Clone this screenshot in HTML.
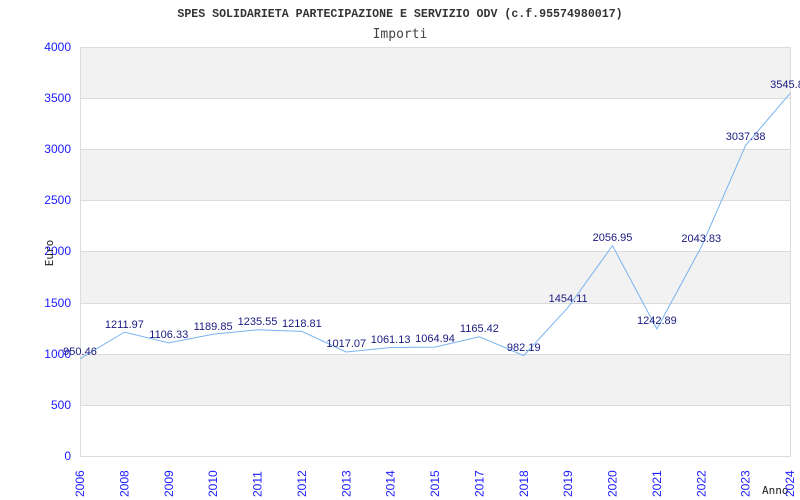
<!DOCTYPE html>
<html><head><meta charset="utf-8"><style>body{margin:0;background:#fff}svg{display:block}</style></head><body>
<svg width="800" height="500" xmlns="http://www.w3.org/2000/svg" font-family="Liberation Sans, sans-serif">
<rect width="800" height="500" fill="#fff"/>
<g fill="#f2f2f2">
<rect x="80" y="47" width="710" height="51"/>
<rect x="80" y="149" width="710" height="51"/>
<rect x="80" y="251" width="710" height="52"/>
<rect x="80" y="354" width="710" height="51"/>
</g>
<g stroke="#dcdcdc" stroke-width="1">
<line x1="80" y1="47.5" x2="790" y2="47.5"/>
<line x1="80" y1="98.5" x2="790" y2="98.5"/>
<line x1="80" y1="149.5" x2="790" y2="149.5"/>
<line x1="80" y1="200.5" x2="790" y2="200.5"/>
<line x1="80" y1="251.5" x2="790" y2="251.5"/>
<line x1="80" y1="303.5" x2="790" y2="303.5"/>
<line x1="80" y1="354.5" x2="790" y2="354.5"/>
<line x1="80" y1="405.5" x2="790" y2="405.5"/>
<line x1="80" y1="456.5" x2="790" y2="456.5"/>
<line x1="80.5" y1="47" x2="80.5" y2="457"/>
<line x1="790.5" y1="47" x2="790.5" y2="457"/>
</g>
<text x="400" y="17" text-anchor="middle" font-family="Liberation Mono, monospace" font-weight="bold" font-size="11.6" fill="#333">SPES SOLIDARIETA PARTECIPAZIONE E SERVIZIO ODV (c.f.95574980017)</text>
<text x="400" y="38" text-anchor="middle" font-family="DejaVu Sans Mono, monospace" font-size="13" fill="#444">Importi</text>
<g fill="#1a1aff" font-size="12" text-anchor="end">
<text x="71" y="51">4000</text><text x="71" y="102">3500</text><text x="71" y="153">3000</text>
<text x="71" y="204">2500</text><text x="71" y="255">2000</text><text x="71" y="307">1500</text>
<text x="71" y="358">1000</text><text x="71" y="409">500</text><text x="71" y="460">0</text>
</g>
<text transform="translate(53,253) rotate(-90)" text-anchor="middle" font-family="DejaVu Sans Mono, monospace" font-size="11" fill="#222">Euro</text>
<text x="762" y="494" font-family="DejaVu Sans Mono, monospace" font-size="11" fill="#222">Anno</text>
<g fill="#1a1aff" font-size="12">
<text transform="translate(84,497) rotate(-90)">2006</text>
<text transform="translate(128.4,497) rotate(-90)">2008</text>
<text transform="translate(172.75,497) rotate(-90)">2009</text>
<text transform="translate(217.1,497) rotate(-90)">2010</text>
<text transform="translate(261.5,497) rotate(-90)">2011</text>
<text transform="translate(305.9,497) rotate(-90)">2012</text>
<text transform="translate(350.25,497) rotate(-90)">2013</text>
<text transform="translate(394.6,497) rotate(-90)">2014</text>
<text transform="translate(439,497) rotate(-90)">2015</text>
<text transform="translate(483.4,497) rotate(-90)">2017</text>
<text transform="translate(527.75,497) rotate(-90)">2018</text>
<text transform="translate(572.1,497) rotate(-90)">2019</text>
<text transform="translate(616.5,497) rotate(-90)">2020</text>
<text transform="translate(660.9,497) rotate(-90)">2021</text>
<text transform="translate(705.25,497) rotate(-90)">2022</text>
<text transform="translate(749.6,497) rotate(-90)">2023</text>
<text transform="translate(794,497) rotate(-90)">2024</text>
</g>
<polyline fill="none" stroke="#7ab4f0" stroke-width="1" points="80,358.8 124.4,332.1 168.75,342.9 213.1,334.3 257.5,329.7 301.9,331.4 346.25,352 390.6,347.5 435,347.1 479.4,336.8 523.75,355.6 568.1,307.3 612.5,245.7 656.9,328.9 701.25,247 745.6,145.4 790,93.4"/>
<g fill="#1a1a80" font-size="11" text-anchor="middle">
<text x="80" y="355">950.46</text>
<text x="124.4" y="328">1211.97</text>
<text x="168.75" y="338">1106.33</text>
<text x="213.1" y="330">1189.85</text>
<text x="257.5" y="325">1235.55</text>
<text x="301.9" y="327">1218.81</text>
<text x="346.25" y="347">1017.07</text>
<text x="390.6" y="343">1061.13</text>
<text x="435" y="342">1064.94</text>
<text x="479.4" y="332">1165.42</text>
<text x="523.75" y="351">982.19</text>
<text x="568.1" y="302">1454.11</text>
<text x="612.5" y="241">2056.95</text>
<text x="656.9" y="324">1242.89</text>
<text x="701.25" y="242">2043.83</text>
<text x="745.6" y="140">3037.38</text>
<text x="787" y="88">3545.8</text>
</g>
</svg>
</body></html>
